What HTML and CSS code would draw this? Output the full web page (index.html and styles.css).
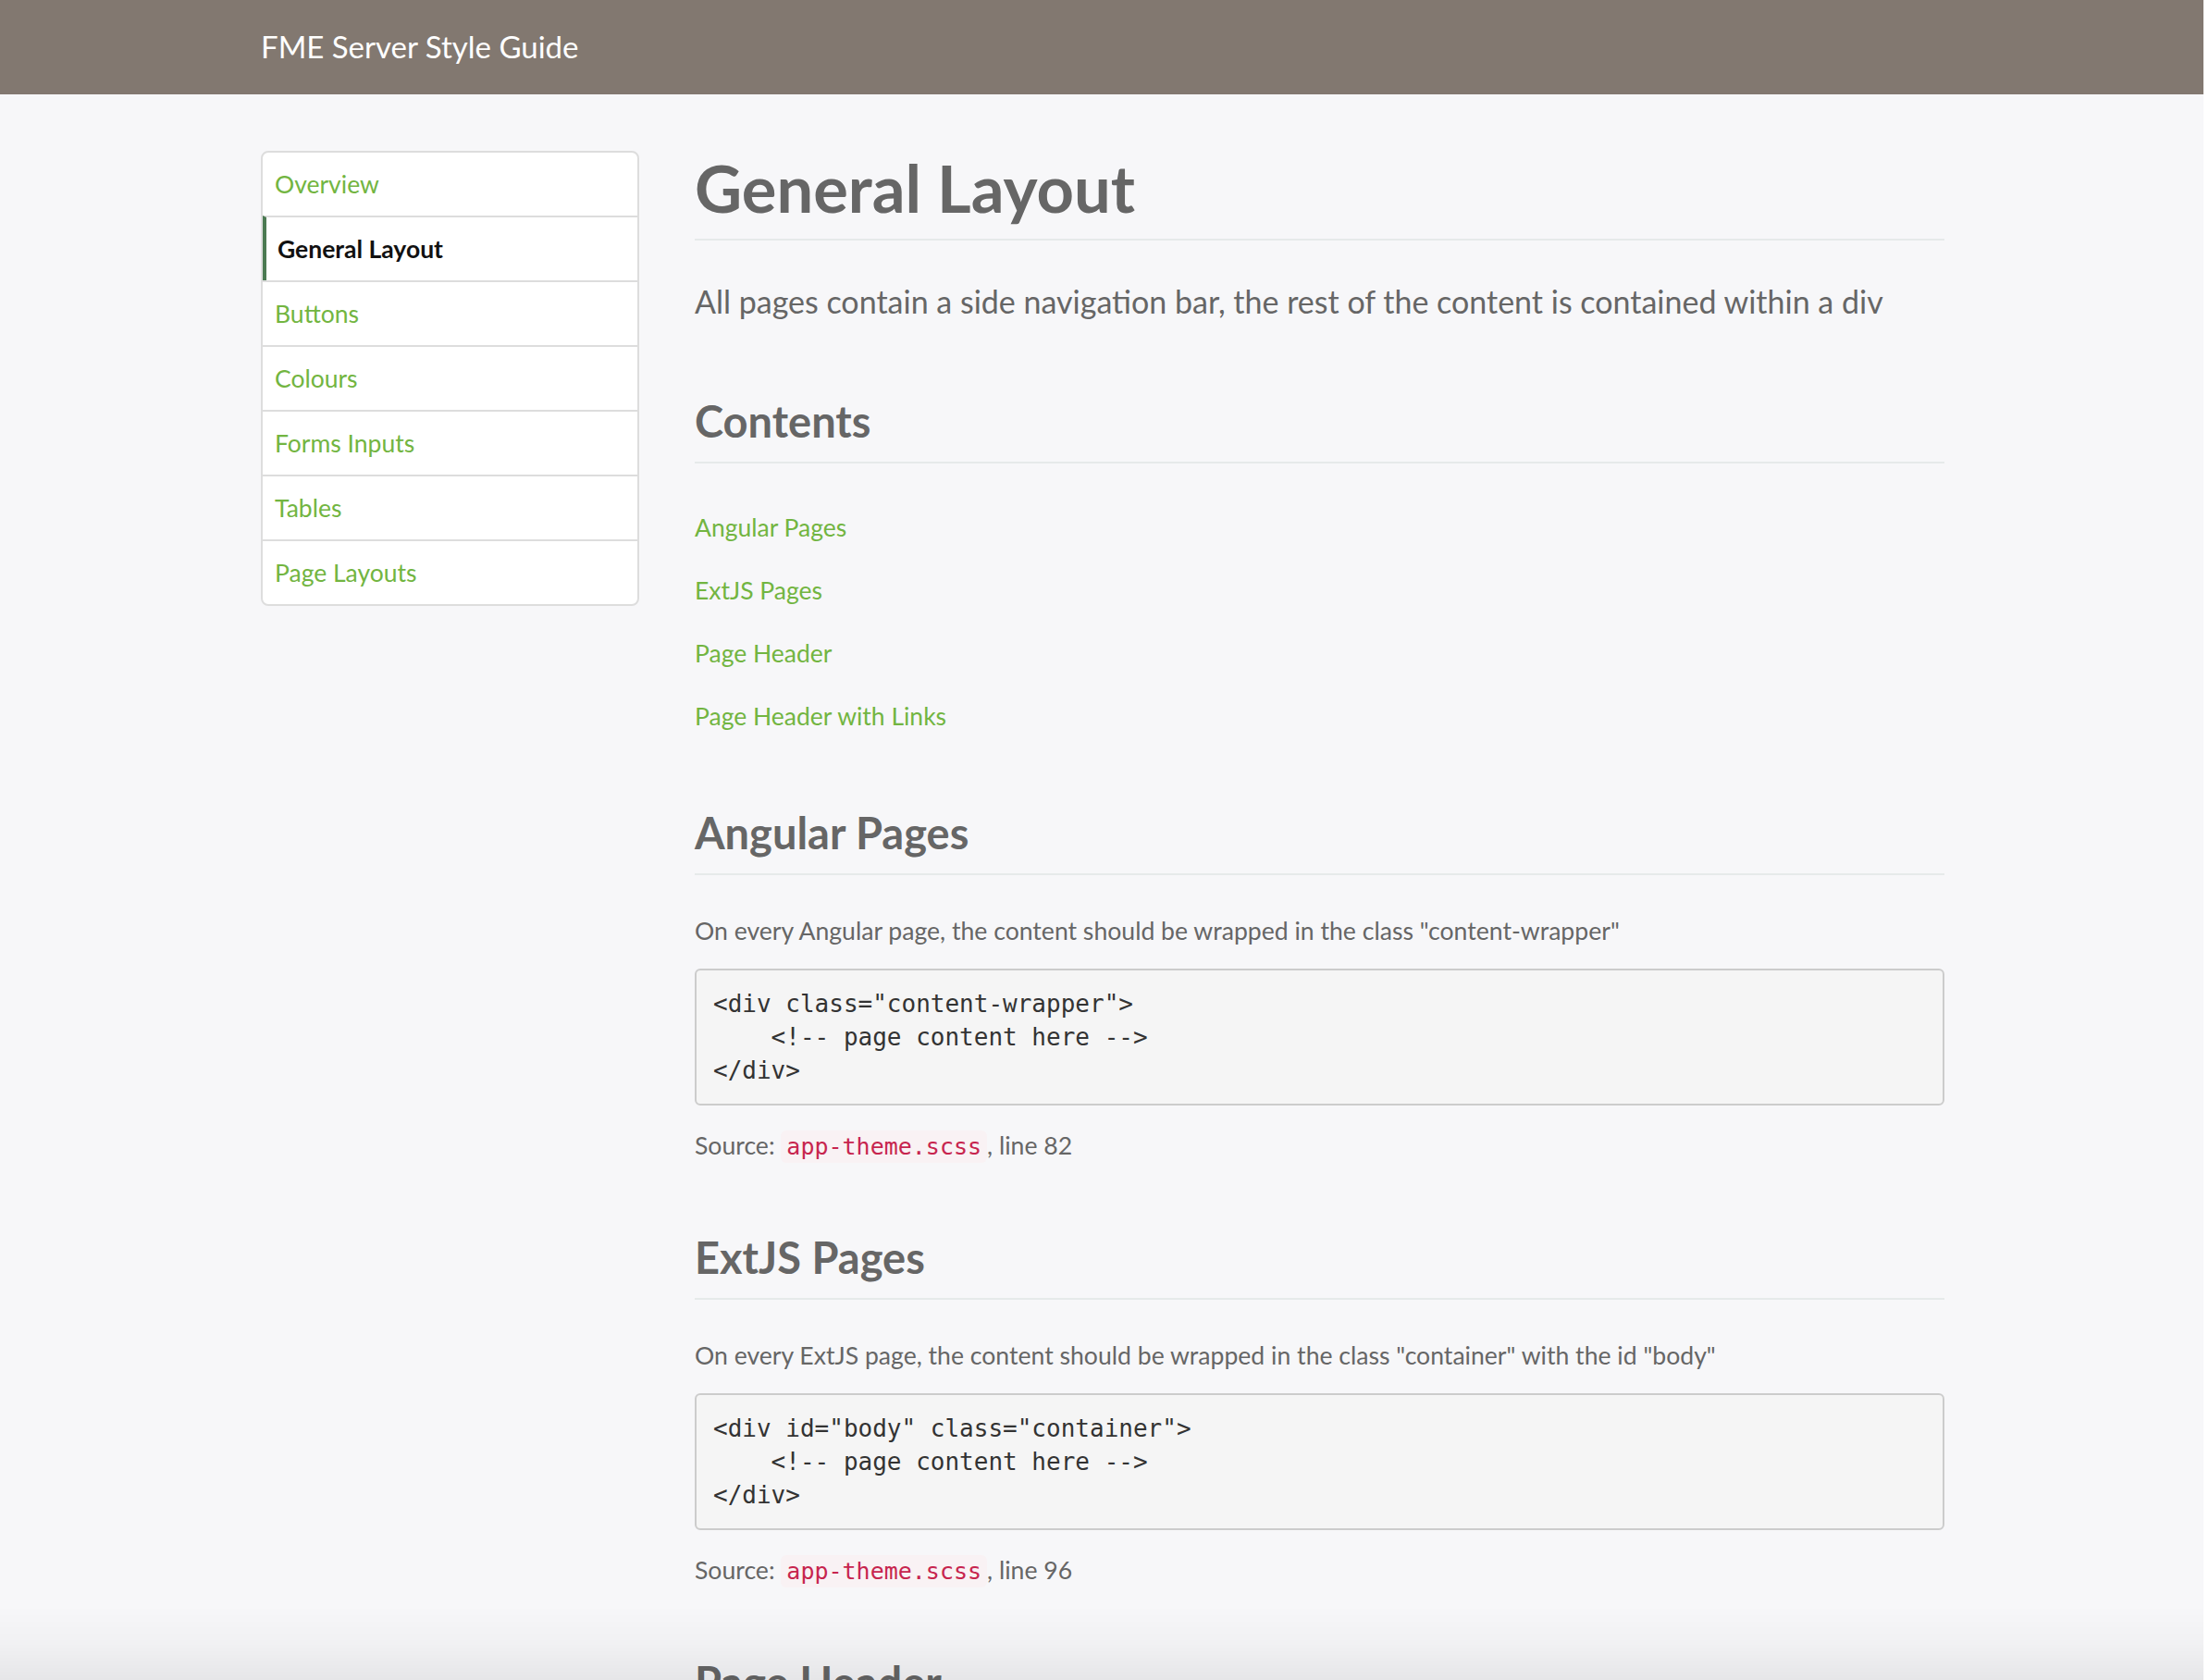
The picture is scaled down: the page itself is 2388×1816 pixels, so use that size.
FILE: index.html
```html
<!DOCTYPE html>
<html lang="en">
<head>
<meta charset="utf-8">
<title>FME Server Style Guide - General Layout</title>
<link rel="stylesheet" href="styles.css">
</head>
<body>
<header class="topbar">
  <div class="brand">FME Server Style Guide</div>
</header>
<div class="page">
  <nav class="sidenav">
    <a class="nav-item" href="#">Overview</a>
    <a class="nav-item active" href="#">General Layout</a>
    <a class="nav-item" href="#">Buttons</a>
    <a class="nav-item" href="#">Colours</a>
    <a class="nav-item" href="#">Forms Inputs</a>
    <a class="nav-item" href="#">Tables</a>
    <a class="nav-item" href="#">Page Layouts</a>
  </nav>
  <main class="content">
    <h1 class="page-title">General Layout</h1>
    <p class="lead">All pages contain a side navigation bar, the rest of the content is contained within a div</p>

    <h2 class="section-title contents-title">Contents</h2>
    <ul class="toc">
      <li><a href="#">Angular Pages</a></li>
      <li><a href="#">ExtJS Pages</a></li>
      <li><a href="#">Page Header</a></li>
      <li><a href="#">Page Header with Links</a></li>
    </ul>

    <section class="section">
      <h2 class="section-title">Angular Pages</h2>
      <p class="desc">On every Angular page, the content should be wrapped in the class "content-wrapper"</p>
      <pre class="code-block">&lt;div class="content-wrapper"&gt;
    &lt;!-- page content here --&gt;
&lt;/div&gt;</pre>
      <p class="source">Source: <code class="file">app-theme.scss</code>, line 82</p>
    </section>

    <section class="section">
      <h2 class="section-title">ExtJS Pages</h2>
      <p class="desc">On every ExtJS page, the content should be wrapped in the class "container" with the id "body"</p>
      <pre class="code-block">&lt;div id="body" class="container"&gt;
    &lt;!-- page content here --&gt;
&lt;/div&gt;</pre>
      <p class="source">Source: <code class="file">app-theme.scss</code>, line 96</p>
    </section>

    <section class="section">
      <h2 class="section-title">Page Header</h2>
    </section>
  </main>
</div>
</body>
</html>
```

FILE: styles.css
```css
html {
  background: #ffffff;
}

body {
  margin: 0 6px 0 0;
  min-height: 100vh;
  background: #f7f7f9;
  font-family: Lato, "Open Sans", "Liberation Sans", sans-serif;
  color: #666666;
  overflow: hidden;
}

body::after {
  content: "";
  position: fixed;
  left: 0;
  right: 6px;
  bottom: 0;
  height: 80px;
  background: linear-gradient(to bottom, rgba(0, 0, 0, 0) 0%, rgba(0, 0, 0, 0.025) 50%, rgba(0, 0, 0, 0.065) 100%);
  pointer-events: none;
}

.topbar {
  height: 102px;
  background: #827870;
  display: flex;
  align-items: center;
  padding-left: 282px;
}

.brand {
  color: #ffffff;
  font-size: 33px;
  line-height: 1;
  padding-bottom: 2px;
}

.page {
  display: flex;
  align-items: flex-start;
  gap: 60px;
  padding: 61px 0 0 282px;
}

.sidenav {
  width: 405px;
  flex: none;
  display: flex;
  flex-direction: column;
  background: #ffffff;
  border: 2px solid #dddddd;
  border-radius: 8px;
  overflow: hidden;
}

.nav-item {
  height: 68px;
  display: flex;
  align-items: center;
  padding-left: 13px;
  font-size: 26.5px;
  color: #72b541;
  text-decoration: none;
  border-top: 2px solid #dddddd;
}

.nav-item:first-child {
  border-top: none;
}

.nav-item.active {
  color: #111111;
  font-weight: 700;
  font-size: 26.5px;
  padding-left: 12px;
  border-left: 4px solid #4b7a52;
}

.content {
  width: 1351px;
  flex: none;
}

.page-title {
  margin: 0;
  font-size: 70.5px;
  font-weight: 700;
  line-height: 80px;
  color: #666666;
  padding-bottom: 15px;
  border-bottom: 2px solid #e6eaea;
}

.lead {
  margin: 42px 0 0;
  font-size: 34px;
  line-height: 48px;
  color: #666666;
}

.section-title {
  margin: 0;
  font-size: 47px;
  font-weight: 700;
  line-height: 56px;
  color: #666666;
  padding-bottom: 16px;
  border-bottom: 2px solid #e6eaea;
}

.contents-title {
  margin-top: 77px;
}

.toc {
  list-style: none;
  margin: 35px 0 0;
  padding: 0;
}

.toc li {
  height: 68px;
  display: flex;
  align-items: center;
}

.toc a {
  font-size: 26.5px;
  color: #72b541;
  text-decoration: none;
}

.section {
  margin-top: 64px;
}

.section + .section {
  margin-top: 71px;
}

.desc {
  margin: 40px 0 0;
  font-size: 26.6px;
  line-height: 40px;
  color: #666666;
}

.code-block {
  margin: 21px 0 0;
  padding: 18px 18px;
  background: #f5f5f5;
  border: 2px solid #cccccc;
  border-radius: 6px;
  font-family: "DejaVu Sans Mono", "Liberation Mono", monospace;
  font-size: 26px;
  line-height: 36px;
  color: #333333;
}

.source {
  margin: 23px 0 0;
  font-size: 26.6px;
  line-height: 40px;
  color: #666666;
}

.file {
  font-family: "DejaVu Sans Mono", "Liberation Mono", monospace;
  font-size: 25px;
  color: #c7254e;
  background: #f9f2f4;
  padding: 3px 6px;
  border-radius: 6px;
}
```
